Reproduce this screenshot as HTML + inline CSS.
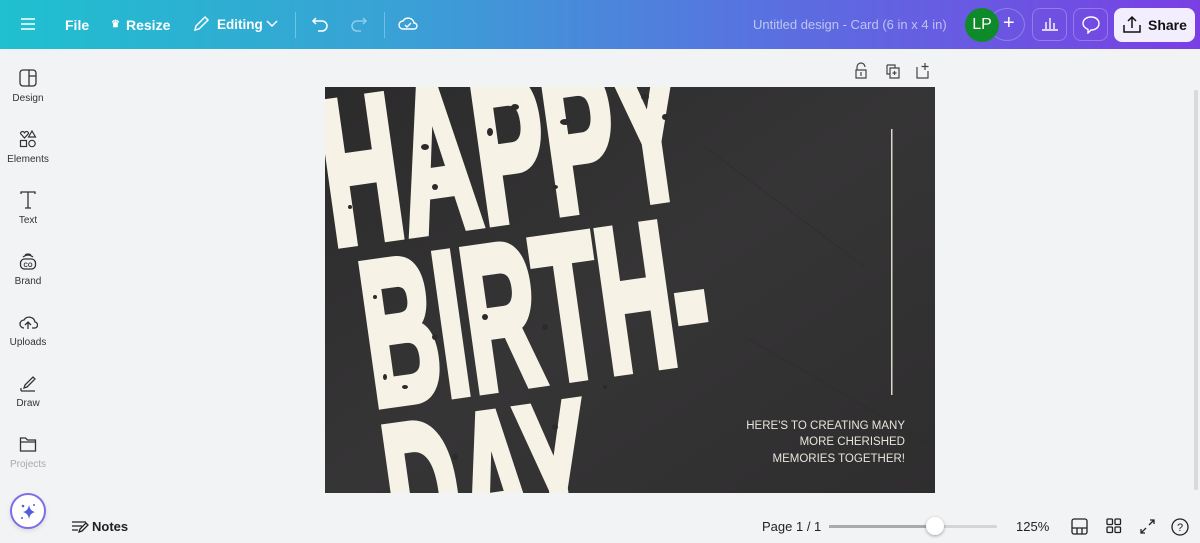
<!DOCTYPE html>
<html><head><meta charset="utf-8"><style>
*{margin:0;padding:0;box-sizing:border-box}
html,body{width:1200px;height:543px;overflow:hidden}
body{background:#f2f3f5;font-family:"Liberation Sans",sans-serif;position:relative}
.top{position:absolute;left:0;top:0;width:1200px;height:49px;background:linear-gradient(90deg,#1fc0cf 0%,#3b9fd6 35%,#5a6fe0 65%,#7a3fe4 100%)}
.t{position:absolute;color:#fff;font-size:14px;font-weight:bold;top:17px}
.side{position:absolute;left:0;top:49px;width:56px;height:494px;background:#f2f3f5}
.si{position:absolute;left:0;width:56px;text-align:center;font-size:10px;color:#333}
.si svg{display:block;margin:0 auto 6px}
.btn{position:absolute;top:8px;height:33px;border:1px solid rgba(255,255,255,.25);border-radius:8px}
</style></head><body>
<div class="top">
 <svg style="position:absolute;left:20px;top:17px" width="16" height="14"><path d="M1 2h14M1 7h14M1 12h14" stroke="#fff" stroke-width="1.6"/></svg>
 <div class="t" style="left:65px">File</div>
 <div class="t" style="left:111px;font-size:10px;top:19px">♛</div>
 <div class="t" style="left:126px">Resize</div>
 <svg style="position:absolute;left:192px;top:15px" width="18" height="18"><path d="M3 15l1-4 9-9 3 3-9 9z" fill="none" stroke="#fff" stroke-width="1.5"/></svg>
 <div class="t" style="left:217px;font-size:13.5px">Editing</div>
 <svg style="position:absolute;left:266px;top:20px" width="12" height="8"><path d="M1 1l5 5 5-5" fill="none" stroke="#fff" stroke-width="1.5"/></svg>
 <div style="position:absolute;left:295px;top:12px;width:1px;height:26px;background:rgba(255,255,255,.3)"></div>
 <svg style="position:absolute;left:311px;top:15px" width="18" height="18"><path d="M5 3L2 6l3 3M2 6h9a5 5 0 010 10H7" fill="none" stroke="#fff" stroke-width="1.5"/></svg>
 <svg style="position:absolute;left:350px;top:15px" width="18" height="18"><path d="M13 3l3 3-3 3M16 6H7a5 5 0 000 10h4" fill="none" stroke="rgba(255,255,255,.45)" stroke-width="1.5"/></svg>
 <div style="position:absolute;left:384px;top:12px;width:1px;height:26px;background:rgba(255,255,255,.3)"></div>
 <svg style="position:absolute;left:398px;top:14px" width="20" height="18"><path d="M5 15a4 4 0 010-8 6 6 0 0111 2 3 3 0 010 6z M7 11l2 2 4-4" fill="none" stroke="#fff" stroke-width="1.4"/></svg>
 <div style="position:absolute;left:753px;top:17px;color:rgba(255,255,255,.6);font-size:13px">Untitled design - Card (6 in x 4 in)</div>
 <div style="position:absolute;left:989px;top:8px;width:36px;height:33px;border:1px solid rgba(255,255,255,.25);border-radius:50%"></div>
 <div style="position:absolute;left:965px;top:8px;width:34px;height:34px;border-radius:50%;background:#0f8a2a;color:#fff;font-size:16px;text-align:center;line-height:34px">LP</div>
 <div class="t" style="left:1003px;top:12px;font-size:20px;font-weight:normal">+</div>
 <div class="btn" style="left:1032px;width:35px"></div>
 <svg style="position:absolute;left:1041px;top:16px" width="18" height="16"><path d="M1 14h16M5 13V6M9 13V2M13 13V7" stroke="#fff" stroke-width="1.4"/></svg>
 <div class="btn" style="left:1073px;width:35px"></div>
 <svg style="position:absolute;left:1081px;top:15px" width="20" height="19"><path d="M10 2c5 0 8 3 8 6.5S15 15 10 15l-3 3v-3.5C4 13 2 11 2 8.5 2 5 5 2 10 2z" fill="none" stroke="#fff" stroke-width="1.4"/></svg>
 <div style="position:absolute;left:1114px;top:8px;width:81px;height:34px;background:#f3eefd;border-radius:8px"></div>
 <svg style="position:absolute;left:1122px;top:15px" width="20" height="19"><path d="M10 13V2M6 6l4-4 4 4M2 10v7h16v-7" fill="none" stroke="#111" stroke-width="1.5"/></svg>
 <div style="position:absolute;left:1148px;top:17px;font-size:14px;font-weight:bold;color:#111">Share</div>
</div>
<div class="side">
 <div class="si" style="top:20px"><svg width="18" height="18"><rect x="1" y="1" width="16" height="16" rx="3" fill="none" stroke="#333" stroke-width="1.3"/><path d="M10 1v16M10 7h7" stroke="#333" stroke-width="1.3"/></svg>Design</div>
 <div class="si" style="top:81px"><svg width="18" height="18"><path d="M1.5 3.5a2 2 0 014 0 2 2 0 014 0L5.5 8z" fill="none" stroke="#333" stroke-width="1.2"/><path d="M13 1l3.5 6h-7z" fill="none" stroke="#333" stroke-width="1.2"/><rect x="1.5" y="10.5" width="6" height="6" fill="none" stroke="#333" stroke-width="1.2"/><circle cx="13" cy="13.5" r="3.2" fill="none" stroke="#333" stroke-width="1.2"/></svg>Elements</div>
 <div class="si" style="top:142px"><svg width="18" height="18"><path d="M2 3V1h14v2M9 1v16M6 17h6" fill="none" stroke="#333" stroke-width="1.3"/></svg>Text</div>
 <div class="si" style="top:203px"><svg width="18" height="18"><rect x="1.5" y="7" width="15" height="10" rx="4" fill="none" stroke="#333" stroke-width="1.3"/><path d="M4 5q5-4 10 0M6 3q3-2 6 0" fill="none" stroke="#333" stroke-width="1.2"/><text x="9" y="15" font-size="6" text-anchor="middle" fill="#333" font-family="Liberation Sans" font-weight="bold">CO</text></svg>Brand</div>
 <div class="si" style="top:264px"><svg width="20" height="18"><path d="M6 15a4 4 0 010-8 6 6 0 0111 2 3 3 0 01-1 6h-2M10 16V9M7 12l3-3 3 3" fill="none" stroke="#333" stroke-width="1.3"/></svg>Uploads</div>
 <div class="si" style="top:325px"><svg width="18" height="18"><path d="M6 11l8-8 2 2-8 8-3 1zM2 17h14M2 14v3" fill="none" stroke="#333" stroke-width="1.3"/></svg>Draw</div>
 <div class="si" style="top:386px;color:#aaa"><svg width="18" height="18"><path d="M1.5 3h5l2 2h8v11h-15z M1.5 7h15" fill="none" stroke="#333" stroke-width="1.3"/></svg>Projects</div>
 <div style="position:absolute;left:10px;top:444px;width:36px;height:36px;border-radius:50%;background:#fff;border:2px solid #7b6ee8;box-shadow:0 2px 5px rgba(0,0,0,.1)"></div>
 <svg style="position:absolute;left:17px;top:452px" width="22" height="22"><path d="M12 4q1 6 6 7q-5 1-6 7q-1-6-6-7q5-1 6-7z" fill="#4f5fdc"/><circle cx="6" cy="5" r="1.3" fill="#4f5fdc"/><circle cx="17" cy="4" r="1" fill="#4f5fdc"/><circle cx="5" cy="17" r="1" fill="#4f5fdc"/></svg>
</div>
<svg style="position:absolute;left:853px;top:62px" width="85" height="18"><path d="M4 8V5a4 4 0 018 0M3 8h10v8H3zM8 10v4" fill="none" stroke="#444" stroke-width="1.2"/><path d="M34 3h8v3M34 3v9h3M37 6h9v10h-9zM41.5 9v4M39.5 11h4" fill="none" stroke="#444" stroke-width="1.2"/><path d="M64 5v11h11v-7M72 1v7M68.5 4.5h7" fill="none" stroke="#444" stroke-width="1.2"/></svg>
<div style="position:absolute;left:1194px;top:90px;width:4px;height:400px;background:#d8d9dc;border-radius:2px"></div>
<svg style="position:absolute;left:325px;top:87px;overflow:hidden" width="610" height="406">
 <defs><clipPath id="c"><rect width="610" height="406"/></clipPath>
 <linearGradient id="g" x1="0" y1="0" x2="1" y2="1"><stop offset="0" stop-color="#2c2b2c"/><stop offset=".5" stop-color="#363536"/><stop offset="1" stop-color="#2f2e2f"/></linearGradient></defs>
 <rect width="610" height="406" fill="url(#g)"/>
 <g clip-path="url(#c)">
  <path d="M380 60l160 120M420 250l190 110" stroke="#2a292a" stroke-width="1" fill="none" opacity=".4"/>
  <g transform="translate(8,158) rotate(-8)" fill="#f6f2e6" stroke="#f6f2e6" stroke-width="9" stroke-linejoin="miter" font-family="Liberation Sans" font-weight="bold" font-size="205">
   <text x="0" y="0" textLength="365" lengthAdjust="spacingAndGlyphs">HAPPY</text>
   <text x="18" y="165" textLength="345" lengthAdjust="spacingAndGlyphs">BIRTH-</text>
   <text x="18" y="330" textLength="205" lengthAdjust="spacingAndGlyphs">DAY</text>
  </g>
  <g fill="#2c2b2c">
   <ellipse cx="190" cy="20" rx="4" ry="3"/><ellipse cx="240" cy="35" rx="5" ry="3"/><ellipse cx="165" cy="45" rx="3" ry="4"/><ellipse cx="100" cy="60" rx="4" ry="3"/><ellipse cx="110" cy="100" rx="3" ry="3"/><ellipse cx="320" cy="10" rx="4" ry="3"/><ellipse cx="340" cy="30" rx="3" ry="3"/><ellipse cx="230" cy="100" rx="3" ry="2"/><ellipse cx="25" cy="120" rx="2" ry="2"/><ellipse cx="110" cy="250" rx="3" ry="3"/><ellipse cx="160" cy="230" rx="3" ry="3"/><ellipse cx="220" cy="240" rx="3" ry="3"/><ellipse cx="80" cy="300" rx="3" ry="2"/><ellipse cx="60" cy="290" rx="2" ry="3"/><ellipse cx="280" cy="300" rx="2" ry="2"/><ellipse cx="130" cy="370" rx="3" ry="3"/><ellipse cx="230" cy="340" rx="3" ry="3"/><ellipse cx="50" cy="210" rx="2" ry="2"/>
  </g>
 </g>
 <rect x="566" y="42" width="1.5" height="266" fill="#ddd8cc"/>
 <g fill="#e8e4da" font-family="Liberation Sans" font-size="11.5" text-anchor="end">
  <text x="580" y="342">HERE'S TO CREATING MANY</text>
  <text x="580" y="358">MORE CHERISHED</text>
  <text x="580" y="375">MEMORIES TOGETHER!</text>
 </g>
</svg>
<svg style="position:absolute;left:71px;top:520px" width="18" height="14"><path d="M1 2h14M1 6h10M1 10h6M8 12l1-3 6-6 2 2-6 6z" fill="none" stroke="#222" stroke-width="1.3"/></svg>
<div style="position:absolute;left:92px;top:519px;font-size:13px;font-weight:bold;color:#222">Notes</div>
<div style="position:absolute;left:762px;top:519px;font-size:13px;color:#222">Page 1 / 1</div>
<div style="position:absolute;left:829px;top:525px;width:168px;height:3px;background:#d4d5d8;border-radius:2px"><div style="width:106px;height:3px;background:#a9aaad"></div></div>
<div style="position:absolute;left:926px;top:517px;width:18px;height:18px;border-radius:50%;background:#fff;box-shadow:0 1px 3px rgba(0,0,0,.35)"></div>
<div style="position:absolute;left:1016px;top:519px;font-size:13px;color:#222">125%</div>
<svg style="position:absolute;left:1070px;top:517px" width="125" height="20"><rect x="2" y="2" width="15" height="15" rx="2" fill="none" stroke="#222" stroke-width="1.3"/><path d="M2 11h15M7 11v6M12 11v6" stroke="#222" stroke-width="1.3"/><rect x="37" y="2" width="5.5" height="5.5" rx="1" fill="none" stroke="#222" stroke-width="1.3"/><rect x="45" y="2" width="5.5" height="5.5" rx="1" fill="none" stroke="#222" stroke-width="1.3"/><rect x="37" y="10" width="5.5" height="5.5" rx="1" fill="none" stroke="#222" stroke-width="1.3"/><rect x="45" y="10" width="5.5" height="5.5" rx="1" fill="none" stroke="#222" stroke-width="1.3"/><path d="M71 16l5-5M71 12v4h4M84 3l-5 5M84 7V3h-4" fill="none" stroke="#222" stroke-width="1.3"/><circle cx="110" cy="10" r="8" fill="none" stroke="#222" stroke-width="1.3"/><text x="110" y="14" font-size="11" text-anchor="middle" fill="#222" font-family="Liberation Sans">?</text></svg>
</body></html>
